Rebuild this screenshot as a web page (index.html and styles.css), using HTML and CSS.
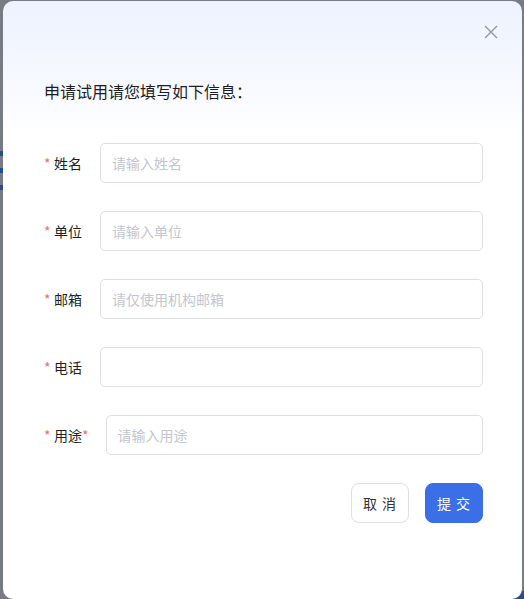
FILE: index.html
```html
<!DOCTYPE html>
<html lang="zh-CN">
<head>
<meta charset="utf-8">
<title>申请试用</title>
<link rel="stylesheet" href="styles.css">
</head>
<body>
<div class="backdrop">
  <div class="edge-marks">
    <span class="mark"></span>
    <span class="mark"></span>
    <span class="mark"></span>
  </div>
  <span class="corner-mark"></span>
</div>
<div class="modal">
  <button class="close" aria-label="关闭">
    <svg width="14" height="14" viewBox="0 0 14 14"><path d="M1 1L13 13M13 1L1 13" stroke="#8e939c" stroke-width="1.3" fill="none"/></svg>
  </button>
  <h2 class="title">申请试用请您填写如下信息：</h2>
  <form class="form">
    <div class="row">
      <label class="label"><span class="req">*</span>姓名</label>
      <input class="input" placeholder="请输入姓名">
    </div>
    <div class="row">
      <label class="label"><span class="req">*</span>单位</label>
      <input class="input" placeholder="请输入单位">
    </div>
    <div class="row">
      <label class="label"><span class="req">*</span>邮箱</label>
      <input class="input" placeholder="请仅使用机构邮箱">
    </div>
    <div class="row">
      <label class="label"><span class="req">*</span>电话</label>
      <input class="input">
    </div>
    <div class="row">
      <label class="label"><span class="req">*</span>用途<span class="req-after">*</span></label>
      <input class="input" placeholder="请输入用途">
    </div>
    <div class="actions">
      <button type="button" class="btn btn-cancel">取 消</button>
      <button type="button" class="btn btn-primary">提 交</button>
    </div>
  </form>
</div>
</body>
</html>
```
FILE: styles.css
```css
html, body {
  margin: 0;
  padding: 0;
  height: 100%;
}
body {
  background: #767b84;
  font-family: "Noto Sans CJK SC", "Noto Sans", sans-serif;
  overflow: hidden;
  position: relative;
}
.backdrop {
  height: 100%;
  position: relative;
}
.edge-marks {
  display: flex;
  flex-direction: column;
  gap: 12px;
  padding-top: 151px;
}
.mark {
  display: block;
  width: 4px;
  height: 5px;
  background: #2a4c8e;
}
.corner-mark {
  position: absolute;
  right: 0;
  bottom: 0;
  width: 16px;
  height: 8px;
  background: #2a4c8e;
}
.modal {
  position: absolute;
  left: 3px;
  top: 1px;
  width: 519px;
  height: 598px;
  box-sizing: border-box;
  border-radius: 10px;
  background: linear-gradient(180deg, #edf2fe 0px, #f7f9ff 80px, #ffffff 135px);
  padding: 78px 39px 0 41px;
}
.close {
  position: absolute;
  right: 24px;
  top: 24px;
  width: 14px;
  height: 14px;
  padding: 0;
  border: 0;
  background: none;
  display: flex;
}
.title {
  margin: 0;
  font-size: 16px;
  line-height: 24px;
  font-weight: 400;
  color: #1d1d1f;
}
.form {
  margin-top: 40px;
  display: flex;
  flex-direction: column;
  gap: 28px;
}
.row {
  display: flex;
  align-items: center;
  gap: 18px;
}
.label {
  font-size: 14px;
  line-height: 20px;
  color: #1f1f1f;
  display: flex;
  align-items: center;
  white-space: nowrap;
}
.req {
  color: #f56c6c;
  width: 10px;
  font-size: 14px;
}
.req-after {
  color: #f56c6c;
  font-size: 14px;
  margin-right: -1px;
}
.input {
  flex: 1;
  min-width: 0;
  height: 40px;
  box-sizing: border-box;
  border: 1px solid #dcdfe6;
  border-radius: 5px;
  padding: 0 11px;
  font-family: inherit;
  font-size: 14px;
  color: #333;
  background: #fff;
  outline: none;
}
.input::placeholder {
  color: #c3c6cc;
}
.actions {
  display: flex;
  justify-content: flex-end;
  gap: 16px;
}
.btn {
  height: 40px;
  width: 58px;
  border-radius: 8px;
  font-family: inherit;
  font-size: 14px;
  letter-spacing: 1px;
  padding: 0;
  cursor: pointer;
}
.btn-cancel {
  background: #fff;
  border: 1px solid #dcdfe6;
  color: #333;
}
.btn-primary {
  background: #3a6fe8;
  border: 1px solid #3a6fe8;
  color: #fff;
}
```
